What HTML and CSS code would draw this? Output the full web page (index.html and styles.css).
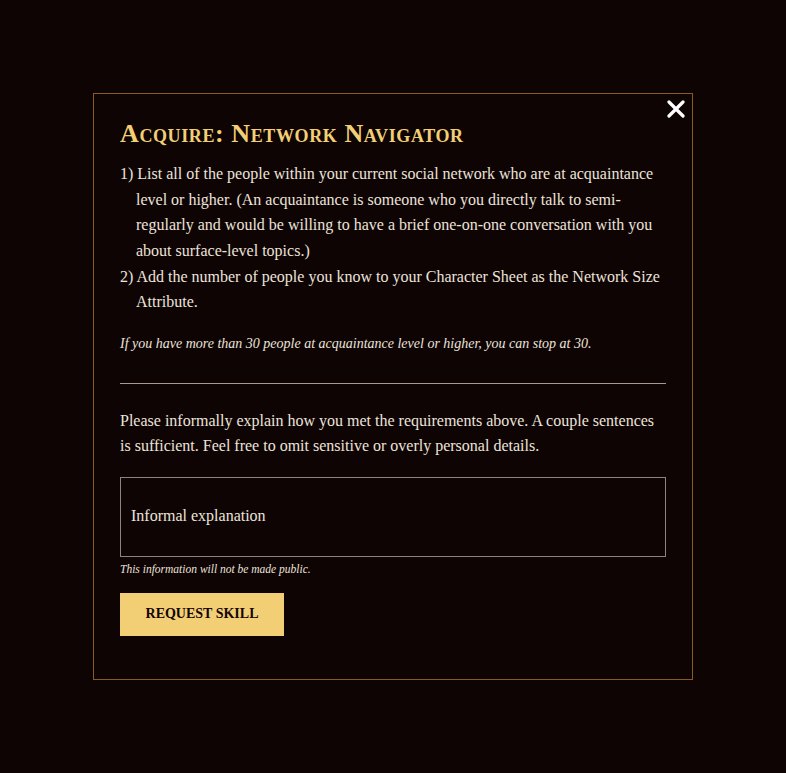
FILE: index.html
```html
<!doctype html>
<html>
  <head>
    <title>Acquire: Network Navigator</title>
    <meta name="viewport" content="width=device-width, initial-scale=1">
    <link rel="stylesheet" href="styles.css">
  </head>
  <body>
    <div class="modal">
      <button class="close" aria-label="Close">
        <svg width="18" height="18" viewBox="0 0 18 18"><path d="M2 2L16 16M16 2L2 16" stroke="#fff" stroke-width="3.2" stroke-linecap="round"/></svg>
      </button>
      <h1>Acquire: Network Navigator</h1>
      <ol class="steps">
        <li><span class="num">1)</span> List all of the people within your current social network who are at acquaintance level or higher. (An acquaintance is someone who you directly talk to semi-regularly and would be willing to have a brief one-on-one conversation with you about surface-level topics.)</li>
        <li><span class="num">2)</span> Add the number of people you know to your Character Sheet as the Network Size Attribute.</li>
      </ol>
      <p class="note">If you have more than 30 people at acquaintance level or higher, you can stop at 30.</p>
      <hr>
      <p class="ask">Please informally explain how you met the requirements above. A couple sentences is sufficient. Feel free to omit sensitive or overly personal details.</p>
      <textarea placeholder="Informal explanation"></textarea>
      <p class="private">This information will not be made public.</p>
      <button class="submit" type="submit">Request Skill</button>
    </div>
  </body>
</html>
```

FILE: styles.css
```css
html {
  box-sizing: border-box;
}
*, *::before, *::after {
  box-sizing: inherit;
}
body {
  margin: 0;
  min-height: 100vh;
  display: flex;
  align-items: center;
  justify-content: center;
  background: #0e0404;
  color: #ece3da;
  font-family: "Liberation Serif", serif;
}
.modal {
  position: relative;
  width: 600px;
  padding: 25px 26px 43px;
  border: 1px solid #8a5a24;
  background: #0e0404;
}
.close {
  position: absolute;
  top: 6px;
  right: 7px;
  padding: 0;
  background: none;
  border: 0;
  cursor: pointer;
}
h1 {
  margin: 0 0 12px;
  font-size: 26px;
  font-variant: small-caps;
  letter-spacing: 0.6px;
  color: #f2cf74;
}
.steps {
  list-style: none;
  margin: 0;
  padding: 0 0 0 16px;
  font-size: 16px;
  line-height: 25.6px;
}
.steps li {
  text-indent: -16px;
}
.note {
  margin: 21px 0 0;
  font-style: italic;
  font-size: 14px;
}
hr {
  margin: 31px 0 24px;
  border: 0;
  border-top: 1px solid #a89890;
}
.ask {
  margin: 0 0 18px;
  font-size: 16px;
  line-height: 25.6px;
}
textarea {
  display: block;
  width: 100%;
  height: 80px;
  padding: 29px 10px;
  resize: none;
  background: transparent;
  border: 1px solid #8c8480;
  color: #ece3da;
  font-family: inherit;
  font-size: 16px;
}
textarea::placeholder {
  color: #ece3da;
}
.private {
  margin: 6px 0 0;
  font-size: 11.5px;
  font-style: italic;
}
.submit {
  margin-top: 18px;
  width: 164px;
  height: 43px;
  border: 0;
  background: #f2cf74;
  color: #140606;
  font-family: inherit;
  font-weight: bold;
  font-size: 14px;
  text-transform: uppercase;
  cursor: pointer;
}
```
